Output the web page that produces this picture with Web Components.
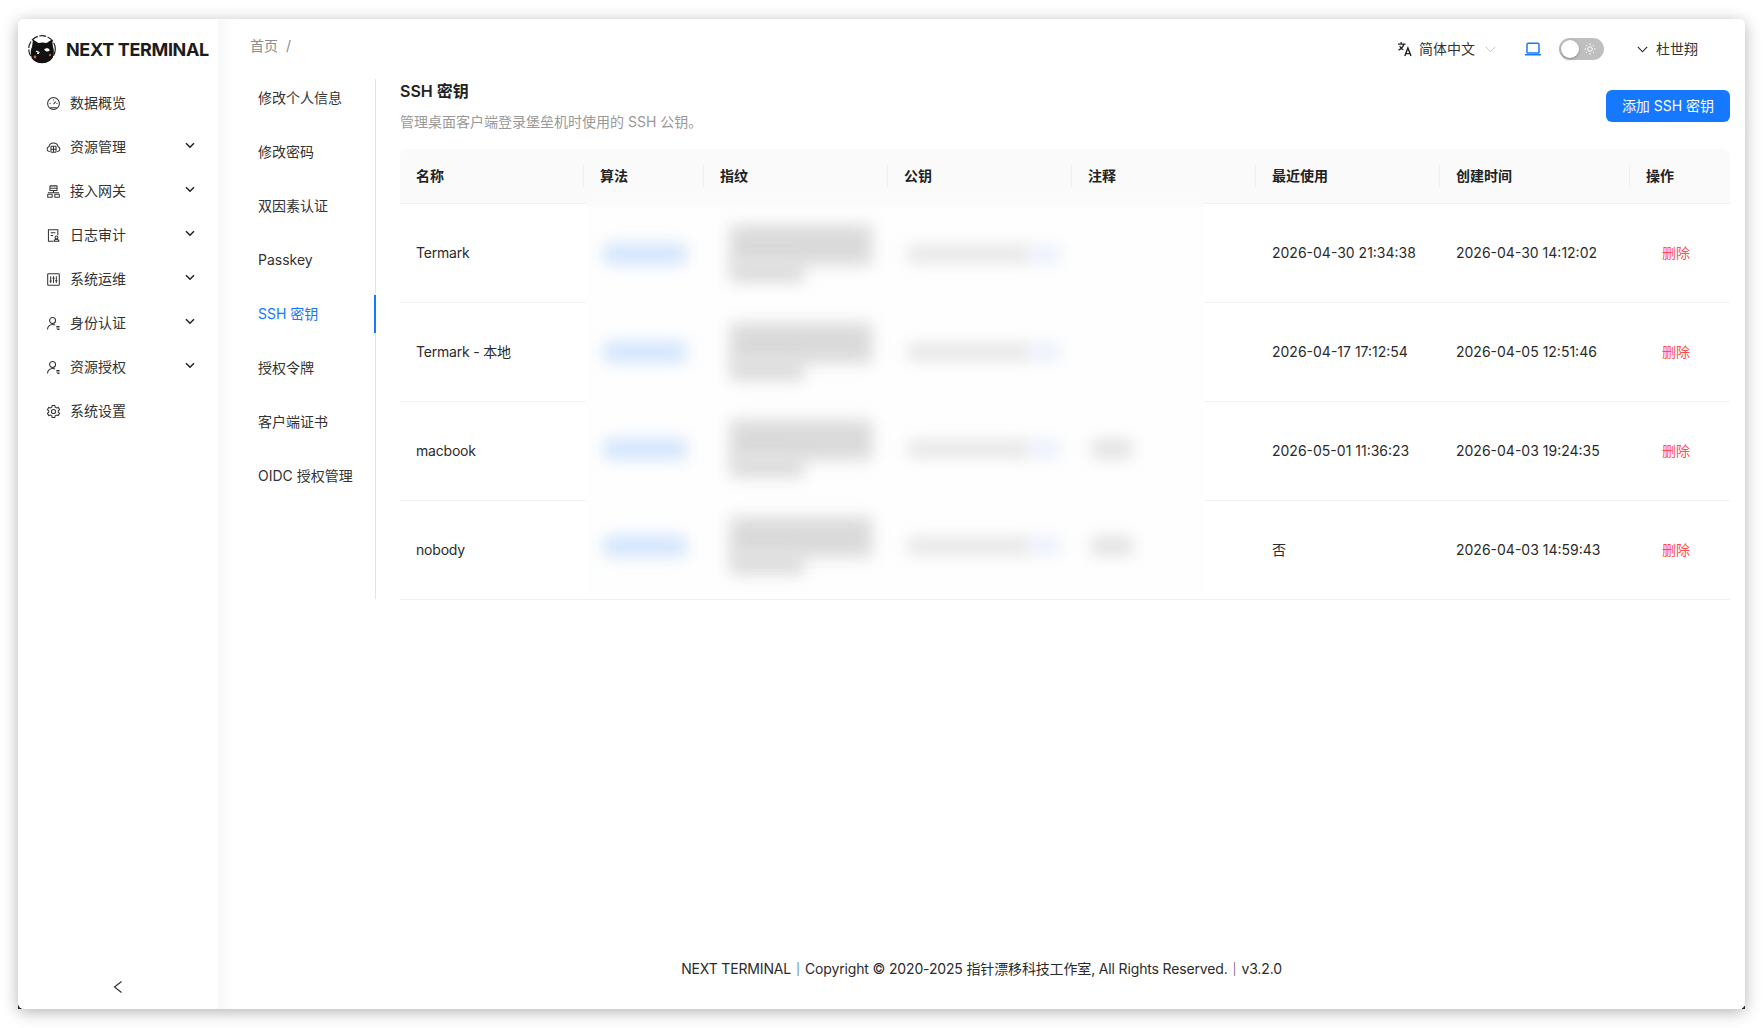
<!DOCTYPE html>
<html lang="zh-CN">
<head>
<meta charset="utf-8">
<title>Next Terminal</title>
<style>
  html, body { margin: 0; height: 100%; background: #fff; overflow: hidden; }
  body {
    box-sizing: border-box;
    padding: 19px 18px;
    font: 14px/22px Inter, "Noto Sans CJK SC", sans-serif;
    color: #2b2b2b;
  }
</style>
</head>
<body>
<app-window>
  <side-bar slot="side">
    <nav-item label="数据概览" icon="gauge"></nav-item>
    <nav-item label="资源管理" icon="cloud" more></nav-item>
    <nav-item label="接入网关" icon="nodes" more></nav-item>
    <nav-item label="日志审计" icon="audit" more></nav-item>
    <nav-item label="系统运维" icon="ops" more></nav-item>
    <nav-item label="身份认证" icon="user" more></nav-item>
    <nav-item label="资源授权" icon="user" more></nav-item>
    <nav-item label="系统设置" icon="gear"></nav-item>
  </side-bar>
  <top-bar slot="top"></top-bar>
  <settings-nav slot="nav">
    <settings-link>修改个人信息</settings-link>
    <settings-link>修改密码</settings-link>
    <settings-link>双因素认证</settings-link>
    <settings-link>Passkey</settings-link>
    <settings-link active>SSH 密钥</settings-link>
    <settings-link>授权令牌</settings-link>
    <settings-link>客户端证书</settings-link>
    <settings-link>OIDC 授权管理</settings-link>
  </settings-nav>
  <ssh-keys slot="content">
    <key-row name="Termark" used="2026-04-30 21:34:38" created="2026-04-30 14:12:02"></key-row>
    <key-row name="Termark - 本地" used="2026-04-17 17:12:54" created="2026-04-05 12:51:46"></key-row>
    <key-row name="macbook" used="2026-05-01 11:36:23" created="2026-04-03 19:24:35"></key-row>
    <key-row name="nobody" used="否" created="2026-04-03 14:59:43"></key-row>
  </ssh-keys>
  <page-footer slot="footer"></page-footer>
</app-window>

<script>
const icons = {
  gauge: '<circle cx="8" cy="8" r="6.3"/><path d="M8 8.6l2.4-2.6M3.8 8h1M11.2 8h1M8 3.8v1M4.6 12.6h6.8"/>',
  cloud: '<path d="M4 12.2H3.6a2.6 2.6 0 0 1-.5-5.1 5 5 0 0 1 9.8 0 2.6 2.6 0 0 1-.5 5.1H12"/><rect x="5.3" y="6.6" width="5.4" height="6.4" rx=".6"/><path d="M5.3 9.8h5.4M8 6.6v6.4"/>',
  nodes: '<rect x="4.200" y="2" width="7.600" height="5" rx=".4"/><path d="M4.200 4.500h7.600M8 7v2M2 9.300h12"/><rect x="1.800" y="11" width="4.800" height="3.200" rx=".4"/><rect x="9.400" y="11" width="4.800" height="3.200" rx=".4"/>',
  audit: '<path d="M7.600 14.200H2.600V1.800h10v6"/><path d="M5 5h5M5 8h2.600"/><circle cx="11.200" cy="10" r="1.500"/><path d="M8.600 14.200c0-1.400 1.100-2.200 2.600-2.200s2.600.8 2.600 2.200z"/>',
  ops: '<rect x="1.800" y="1.800" width="12.400" height="12.400" rx=".6"/><path d="M5 4.400v7.200M8 4.400v7.200M11 4.400v7.200M3.900 9.600h2.200M6.900 6.600h2.200M9.900 9.200h2.200"/>',
  user: '<circle cx="7" cy="4.800" r="3.200"/><path d="M1.600 14.400c0-3.200 2.400-5.400 5.400-5.400 1 0 1.900.2 2.600.6"/><path d="M11 11.200h3.400M11 12.800h3.400M12 14.400h2.400" stroke-width="1.100"/>',
  gear: '<path d="M6.600 1.600h2.800l.4 1.800 1.500.9 1.800-.6 1.400 2.400-1.400 1.200v1.400l1.400 1.200-1.400 2.400-1.800-.6-1.500.9-.4 1.800H6.600l-.4-1.800-1.500-.9-1.800.6-1.400-2.400 1.400-1.200V7.300L1.500 6.100l1.400-2.400 1.800.6 1.500-.9z"/><circle cx="8" cy="8" r="2.200"/>'
}

const windowTemplate = document.createElement('template')
windowTemplate.innerHTML = `
<style>
  :host { display: block; position: relative; width: 1727px; height: 990px; }
  .corner { position: absolute; bottom: 0; width: 6px; height: 6px; background: #1c2b22; }
  .corner.left { left: 0; }
  .corner.right { right: 0; width: 3px; height: 3px; background: #333; }
  .frame {
    position: relative;
    display: flex;
    height: 100%;
    background: #fff;
    border-radius: 6px;
    box-shadow: 0 3px 16px rgba(0, 0, 0, .3);
    overflow: hidden;
  }
  main {
    flex: 1;
    min-width: 0;
    display: flex;
    flex-direction: column;
    background: linear-gradient(90deg, #f6f7f7, #fff 16px);
  }
  .body { display: flex; height: 520px; }
  .footer { margin-top: auto; }
</style>
<div class="corner left"></div>
<div class="corner right"></div>
<div class="frame">
  <slot name="side"></slot>
  <main>
    <slot name="top"></slot>
    <div class="body">
      <slot name="nav"></slot>
      <slot name="content"></slot>
    </div>
    <div class="footer"><slot name="footer"></slot></div>
  </main>
</div>`

class AppWindow extends HTMLElement {
  constructor () {
    super()
    this.attachShadow({ mode: 'open' })
    this.shadowRoot.appendChild(windowTemplate.content.cloneNode(true))
  }
}

const sideTemplate = document.createElement('template')
sideTemplate.innerHTML = `
<style>
  :host { display: flex; flex-direction: column; flex: none; width: 200px; height: 100%; background: #fff; }
  .brand { display: flex; align-items: center; gap: 10px; height: 60px; padding: 0 0 0 10px; box-sizing: border-box; }
  .brand svg { flex: none; width: 28px; height: 30px; }
  .brand span { font-size: 18px; font-weight: 700; color: #1c1c1c; white-space: nowrap; letter-spacing: -.35px; margin-top: 1px; }
  .menu { flex: 1; padding-top: 2px; }
  .collapse { display: flex; justify-content: center; align-items: center; height: 44px; }
</style>
<div class="brand">
  <svg viewBox="0 0 28 30">
    <circle cx="14" cy="15" r="13.3" fill="#fff" stroke="#222" stroke-width="1.2" stroke-dasharray="7 1.5"/>
    <path d="M4 13 L5 5.500 L10.500 9 C13 8.200 16 8.200 18.500 9 L24 5.500 L25 13 C27 18 26.500 29 14 29.300 C2 29 1.500 18 4 13z" fill="#111"/>
    <path d="M8 17l3.500 1.500M11 19.500l-2-.3M17 15.500c1.500-1.200 3.500-.7 4 .8-1.200 1-3 1-4-.8z" stroke="#fff" stroke-width="1.200" fill="#fff"/>
    <circle cx="7" cy="23" r="1.400" fill="#e2543f"/>
    <circle cx="22" cy="21" r="1.200" fill="#c9503f"/>
  </svg>
  <span>NEXT TERMINAL</span>
</div>
<div class="menu"><slot></slot></div>
<div class="collapse">
  <svg width="10" height="14" viewBox="0 0 10 14" fill="none" stroke="#333" stroke-width="1.200"><path d="M8.500 1.500L1.500 7l7 5.500"/></svg>
</div>`

class SideBar extends HTMLElement {
  constructor () {
    super()
    this.attachShadow({ mode: 'open' })
    this.shadowRoot.appendChild(sideTemplate.content.cloneNode(true))
  }
}

const navItemTemplate = document.createElement('template')
navItemTemplate.innerHTML = `
<style>
  :host { display: flex; align-items: center; height: 44px; padding: 0 23px 0 28px; color: #333; font-size: 14px; }
  .icon { flex: none; width: 15px; height: 15px; margin-right: 9px; fill: none; stroke: #333; stroke-width: 1.100; }
  .label { flex: 1; }
  .more { flex: none; width: 10px; height: 7px; margin-top: -3px; fill: none; stroke: #222; stroke-width: 1.500; display: none; }
  :host([more]) .more { display: block; }
</style>
<svg class="icon" viewBox="0 0 16 16"></svg>
<span class="label"></span>
<svg class="more" viewBox="0 0 10 7"><path d="M1 1.200l4 4 4-4"/></svg>`

class NavItem extends HTMLElement {
  constructor () {
    super()
    this.attachShadow({ mode: 'open' })
    this.shadowRoot.appendChild(navItemTemplate.content.cloneNode(true))
  }

  connectedCallback() {
    this.shadowRoot.querySelector('.label').textContent = this.getAttribute('label')
    this.shadowRoot.querySelector('.icon').innerHTML = icons[this.getAttribute('icon')]
  }
}

const topTemplate = document.createElement('template')
topTemplate.innerHTML = `
<style>
  :host { display: flex; align-items: center; flex: none; height: 60px; padding: 0 47px 0 32px; box-sizing: border-box; font-size: 14px; }
  .crumb { flex: 1; color: #8c8c8c; margin-top: -6px; }
  .crumb i { font-style: normal; margin-left: 8px; }
  .lang { display: flex; align-items: center; color: #333; }
  .lang .tr { width: 16px; height: 16px; margin-right: 6px; }
  .lang .down { width: 11px; height: 7px; margin-left: 10px; fill: none; stroke: #c4c4c4; stroke-width: 1; }
  .laptop { width: 18px; height: 16px; margin-left: 28px; fill: none; stroke: #1677ff; stroke-width: 1.500; }
  .switch { position: relative; width: 45px; height: 22px; margin-left: 17px; background: #bfbfbf; border-radius: 11px; }
  .switch b { position: absolute; top: 2px; left: 2px; width: 18px; height: 18px; background: #fff; border-radius: 50%; box-shadow: 0 1px 3px rgba(0, 0, 0, .3); }
  .switch svg { position: absolute; top: 5px; right: 8px; width: 12px; height: 12px; fill: none; stroke: #fff; stroke-width: 1; }
  .user { display: flex; align-items: center; margin-left: 33px; color: #333; }
  .user svg { width: 11px; height: 7px; margin-right: 8px; fill: none; stroke: #222; stroke-width: 1.100; }
</style>
<div class="crumb">首页<i>/</i></div>
<div class="lang">
  <svg class="tr" viewBox="0 0 16 16" fill="none" stroke="#222" stroke-width="1.200">
    <path d="M1 3.200h7.500M4.200 1v2.200M7 3.200C6 6 4 8 1.500 9.200M2.700 5c.8 1.800 2 3 3.600 3.800"/>
    <path d="M7.800 15l3.100-8 3.100 8M9 12.600h3.900" stroke-width="1.400"/>
  </svg>
  <span>简体中文</span>
  <svg class="down" viewBox="0 0 11 7"><path d="M.8.800l4.700 5 4.700-5"/></svg>
</div>
<svg class="laptop" viewBox="0 0 18 16"><path d="M3 12V3.500a1.300 1.300 0 0 1 1.300-1.300h9.400A1.300 1.300 0 0 1 15 3.500V12"/><path d="M1.500 13.800h15" stroke-linecap="round"/><path d="M3 12h12"/></svg>
<div class="switch">
  <b></b>
  <svg viewBox="0 0 12 12"><circle cx="6" cy="6" r="2.300"/><path d="M6 .5v1.500M6 10v1.500M.5 6H2M10 6h1.500M2.100 2.100l1 1M8.900 8.900l1 1M2.100 9.900l1-1M8.900 3.100l1-1"/></svg>
</div>
<div class="user">
  <svg viewBox="0 0 11 7"><path d="M.8.800l4.700 5 4.700-5"/></svg>
  <span>杜世翔</span>
</div>`

class TopBar extends HTMLElement {
  constructor () {
    super()
    this.attachShadow({ mode: 'open' })
    this.shadowRoot.appendChild(topTemplate.content.cloneNode(true))
  }
}

class SettingsNav extends HTMLElement {
  constructor () {
    super()
    this.attachShadow({ mode: 'open' })
    this.shadowRoot.innerHTML = `
      <style>
        :host { display: flex; flex-direction: column; gap: 16px; flex: none; box-sizing: border-box; width: 158px; height: 520px; border-right: 1px solid #e3e3e3; }
      </style>
      <slot></slot>`
  }
}

class SettingsLink extends HTMLElement {
  constructor () {
    super()
    this.attachShadow({ mode: 'open' })
    this.shadowRoot.innerHTML = `
      <style>
        :host { display: flex; align-items: center; position: relative; height: 38px; padding-left: 40px; color: #333; white-space: nowrap; }
        :host([active]) { color: #1677ff; }
        :host([active])::after { content: ""; position: absolute; top: 0; right: -1px; width: 2px; height: 38px; background: #1677ff; }
      </style>
      <slot></slot>`
  }
}

const keysTemplate = document.createElement('template')
keysTemplate.innerHTML = `
<style>
  :host { display: block; flex: none; width: 1330px; margin-left: 24px; }
  header { display: flex; justify-content: space-between; height: 70px; }
  h2 { margin: 0; font-size: 16px; line-height: 24px; font-weight: 600; color: #222; }
  p { margin: 8px 0 0; font-size: 14px; line-height: 22px; color: #999; }
  button {
    align-self: flex-start; margin-top: 11px; height: 32px; width: 124px; padding: 0;
    border: 0; border-radius: 6px; background: #1677ff; color: #fff; font: inherit;
  }
  .table { position: relative; }
  .head { display: grid; grid-template-columns: 184px 120px 184px 184px 184px 184px 190px 100px; height: 55px; box-sizing: border-box; background: #fafafa; border-radius: 8px 8px 0 0; border-bottom: 1px solid #f0f0f0; font-weight: 600; color: #222; }
  .head span { display: flex; align-items: center; position: relative; padding-left: 16px; }
  .head span:not(:last-child)::after { content: ""; position: absolute; top: 16px; right: 0; width: 1px; height: 22px; background: #f0f0f0; }
  .veil { position: absolute; left: 186px; top: 49px; width: 619px; height: 399px; overflow: hidden; background: linear-gradient(#fafafa, #fefefe 14px); }
  .veil i { position: absolute; filter: blur(8px); }
</style>
<header>
  <div><h2>SSH 密钥</h2><p>管理桌面客户端登录堡垒机时使用的 SSH 公钥。</p></div>
  <button type="button">添加 SSH 密钥</button>
</header>
<div class="table">
  <div class="head">
    <span>名称</span><span>算法</span><span>指纹</span><span>公钥</span><span>注释</span><span>最近使用</span><span>创建时间</span><span>操作</span>
  </div>
  <slot></slot>
  <div class="veil"></div>
</div>`

class SshKeys extends HTMLElement {
  constructor () {
    super()
    this.attachShadow({ mode: 'open' })
    this.shadowRoot.appendChild(keysTemplate.content.cloneNode(true))
  }

  connectedCallback() {
    // centres of the blurred cells, one per row
    const centres = [254, 352, 449, 546]
    let blobs = ''
    const blob = (x, y, w, h, c) => `<i style="left:${x - 586}px;top:${y - 198}px;width:${w}px;height:${h}px;background:${c}"></i>`
    centres.forEach((c, n) => {
      blobs += blob(604, c - 10, 82, 20, '#d0e3fc')
      blobs += blob(730, c - 29, 142, 40, '#dadada')
      blobs += blob(730, c + 8, 74, 20, '#dadada')
      blobs += blob(908, c - 8, 122, 16, '#e4e4e4')
      blobs += blob(1030, c - 8, 30, 16, '#e8eefb')
      if (n > 1) blobs += blob(1092, c - 9, 40, 18, '#e0e0e0')
    })
    this.shadowRoot.querySelector('.veil').innerHTML = blobs
  }
}

class KeyRow extends HTMLElement {
  constructor () {
    super()
    this.attachShadow({ mode: 'open' })
    this.shadowRoot.innerHTML = `
      <style>
        :host { display: grid; grid-template-columns: 856px 184px 190px 100px; height: 99px; box-sizing: border-box; border-bottom: 1px solid #f0f0f0; color: #2b2b2b; }
        div { display: flex; align-items: center; padding-left: 16px; padding-bottom: 1px; }
        .name { letter-spacing: -.2px; }
        .del { color: #ff4d4f; padding-left: 32px; }
      </style>
      <div class="name"></div><div class="used"></div><div class="created"></div><div class="del">删除</div>`
  }

  connectedCallback() {
    for (const key of ['name', 'used', 'created']) {
      this.shadowRoot.querySelector('.' + key).textContent = this.getAttribute(key)
    }
  }
}

class PageFooter extends HTMLElement {
  constructor () {
    super()
    this.attachShadow({ mode: 'open' })
    this.shadowRoot.innerHTML = `
      <style>
        :host { display: block; height: 51px; text-align: center; color: #2b2b2b; font-size: 14px; line-height: 22px; letter-spacing: -.15px; }
      </style>
      NEXT TERMINAL｜Copyright © 2020-2025 指针漂移科技工作室, All Rights Reserved.｜v3.2.0`
  }
}

customElements.define('app-window', AppWindow)
customElements.define('side-bar', SideBar)
customElements.define('nav-item', NavItem)
customElements.define('top-bar', TopBar)
customElements.define('settings-nav', SettingsNav)
customElements.define('settings-link', SettingsLink)
customElements.define('ssh-keys', SshKeys)
customElements.define('key-row', KeyRow)
customElements.define('page-footer', PageFooter)
</script>
</body>
</html>
